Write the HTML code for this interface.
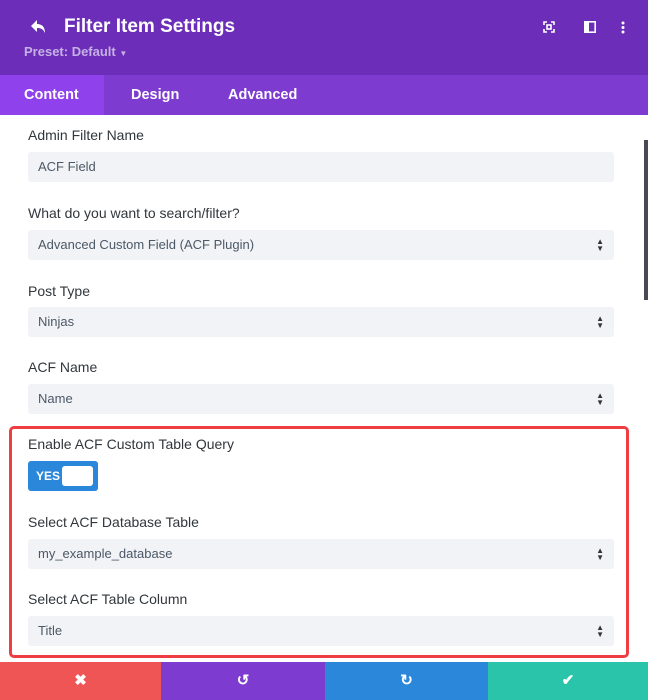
<!DOCTYPE html><html><head><style>
*{margin:0;padding:0;box-sizing:border-box}
body{width:648px;height:700px;overflow:hidden;background:#fff;font-family:"Liberation Sans",sans-serif;position:relative}
.hd{position:absolute;left:0;top:0;width:648px;height:75px;background:#6c2eb9}
.tabs{position:absolute;left:0;top:75px;width:648px;height:40px;background:#7e3bd0}
.tab{position:absolute;top:0;height:40px;line-height:40px;color:#fff;font-size:14.5px;font-weight:bold}
.lbl{position:absolute;left:28px;font-size:14px;color:#32373c}
.inp{position:absolute;left:28px;width:586px;height:30px;background:#f1f3f7;border-radius:3px;font-size:13px;color:#4c5866;line-height:30px;padding-left:10px}
.arr{position:absolute;right:10px;top:8px;font-size:8px;line-height:7px;color:#333}
.ft{position:absolute;top:662px;height:38px;color:#fff;text-align:center;line-height:38px;font-size:15px;font-weight:bold}
</style></head><body>
<div class="hd">
<svg style="position:absolute;left:30px;top:19px" width="18" height="16" viewBox="0 0 18 16"><path d="M7 1 L1 7 L7 13 V9 C11 9 13 10 15 14 C15 8 12 5 7 5 Z" fill="#fff"/></svg>
<div style="position:absolute;left:64px;top:16px;color:#fff;font-size:19px;font-weight:bold">Filter Item Settings</div>
<div style="position:absolute;left:24px;top:44px;color:#c6b0e6;font-size:13px;font-weight:bold">Preset: Default <span style="font-size:8px">▼</span></div>
<svg style="position:absolute;left:543px;top:21px" width="12" height="12" viewBox="0 0 12 12" fill="none" stroke="#fff" stroke-width="1.6"><path d="M1 4V1H4M8 1H11V4M11 8V11H8M4 11H1V8"/><rect x="4" y="4" width="4" height="4"/></svg>
<svg style="position:absolute;left:584px;top:21px" width="12" height="12" viewBox="0 0 12 12"><rect x="0.8" y="0.8" width="10.4" height="10.4" fill="none" stroke="#fff" stroke-width="1.6"/><rect x="0" y="0" width="5" height="12" fill="#fff"/></svg>
<svg style="position:absolute;left:621px;top:21px" width="4" height="13"><circle cx="2" cy="2" r="1.5" fill="#fff"/><circle cx="2" cy="6.5" r="1.5" fill="#fff"/><circle cx="2" cy="11" r="1.5" fill="#fff"/></svg>
</div>
<div class="tabs"><div class="tab" style="left:0;width:104px;background:#8f42ec;padding-left:24px">Content</div><div class="tab" style="left:131px">Design</div><div class="tab" style="left:228px">Advanced</div></div>
<div style="position:absolute;left:644px;top:140px;width:4px;height:160px;background:#4a4a55"></div>
<div class="lbl" style="top:127px">Admin Filter Name</div>
<div class="inp" style="top:152px">ACF Field</div>
<div class="lbl" style="top:205px">What do you want to search/filter?</div>
<div class="inp" style="top:230px">Advanced Custom Field (ACF Plugin)<div class="arr">▲<br>▼</div></div>
<div class="lbl" style="top:283px">Post Type</div>
<div class="inp" style="top:307px">Ninjas<div class="arr">▲<br>▼</div></div>
<div class="lbl" style="top:359px">ACF Name</div>
<div class="inp" style="top:384px">Name<div class="arr">▲<br>▼</div></div>
<div style="position:absolute;left:9px;top:426px;width:620px;height:232px;border:3px solid #ef3e42;border-radius:5px"></div>
<div class="lbl" style="top:436px">Enable ACF Custom Table Query</div>
<div style="position:absolute;left:28px;top:461px;width:70px;height:30px;background:#2b87da;border-radius:3px"><span style="position:absolute;left:8px;top:8px;color:#fff;font-size:12px;font-weight:bold">YES</span><div style="position:absolute;left:34px;top:5px;width:31px;height:20px;background:#fff;border-radius:3px"></div></div>
<div class="lbl" style="top:514px">Select ACF Database Table</div>
<div class="inp" style="top:539px">my_example_database<div class="arr">▲<br>▼</div></div>
<div class="lbl" style="top:591px">Select ACF Table Column</div>
<div class="inp" style="top:616px">Title<div class="arr">▲<br>▼</div></div>
<div class="ft" style="left:0;width:161px;background:#ef5555">✖</div>
<div class="ft" style="left:161px;width:164px;background:#7d3bcf">↺</div>
<div class="ft" style="left:325px;width:163px;background:#2b87da">↻</div>
<div class="ft" style="left:488px;width:160px;background:#29c4a9">✔</div>
</body></html>
